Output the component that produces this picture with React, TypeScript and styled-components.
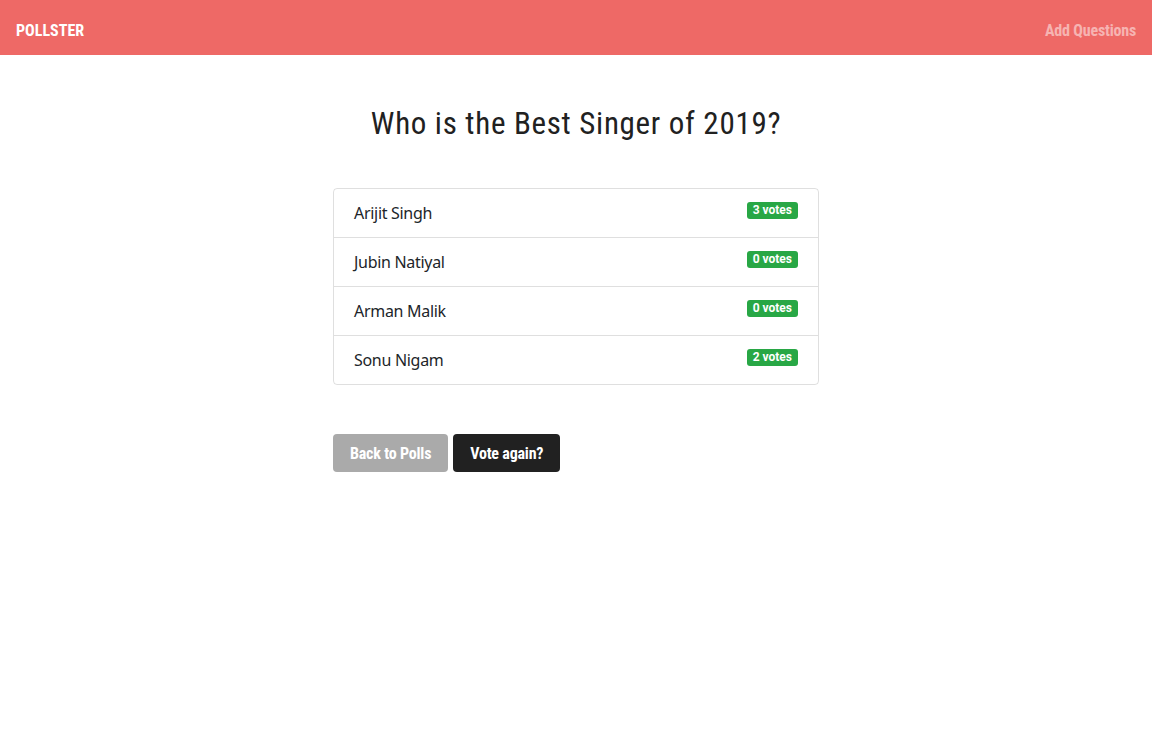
import React from "react";
import styled, { createGlobalStyle } from "styled-components";

const Global = createGlobalStyle`
  html, body { margin: 0; padding: 0; background: #fff; }
  body { font-family: "Noto Sans", "Open Sans", sans-serif; color: #212529; }
  * { box-sizing: border-box; }
`;

const cond = `"Roboto Condensed", "Open Sans", sans-serif`;

const Navbar = styled.nav`
  height: 55px;
  background: #ee6966;
  display: flex;
  align-items: center;
  justify-content: space-between;
  padding: 6px 16px 0;
`;

const Brand = styled.a`
  font-family: ${cond};
  font-weight: 700;
  font-size: 16px;
  color: #fff;
`;

const NavLink = styled.a`
  font-family: ${cond};
  font-weight: 700;
  font-size: 16px;
  color: rgba(255, 255, 255, 0.5);
  letter-spacing: -0.2px;
`;

const Main = styled.main`
  width: 486px;
  margin: 0 auto;
  display: flex;
  flex-direction: column;
`;

const Title = styled.h1`
  font-family: ${cond};
  font-weight: 400;
  font-size: 31px;
  letter-spacing: 0.7px;
  white-space: nowrap;
  text-align: center;
  margin: 50px 0 46px;
  color: #212121;
  line-height: 1.2;
`;

const List = styled.ul`
  list-style: none;
  margin: 0;
  padding: 0;
  border: 1px solid rgba(0, 0, 0, 0.125);
  border-radius: 4px;
`;

const Item = styled.li`
  height: 48px;
  display: flex;
  justify-content: space-between;
  align-items: center;
  padding: 0 20px;
  font-size: 16px;
  letter-spacing: -0.3px;
  color: #212529;
  & + & {
    border-top: 1px solid rgba(0, 0, 0, 0.125);
    height: 49px;
  }
`;

const Badge = styled.span`
  background: #28a745;
  color: #fff;
  font-family: Roboto, "Noto Sans", sans-serif;
  font-weight: 700;
  font-size: 12px;
  letter-spacing: 0;
  line-height: 17px;
  height: 17px;
  padding: 0 6px;
  border-radius: 3px;
  align-self: flex-start;
  margin-top: 13px;
`;

const Actions = styled.div`
  display: flex;
  gap: 5px;
  margin-top: 49px;
`;

const Button = styled.button<{ $dark?: boolean }>`
  height: 38px;
  border: none;
  border-radius: 4px;
  padding: 0 17px;
  font-family: ${cond};
  font-weight: 700;
  font-size: 16px;
  letter-spacing: -0.2px;
  color: #fff;
  background: ${(p) => (p.$dark ? "#212121" : "#aaaaaa")};
  cursor: pointer;
`;

const options = [
  { name: "Arijit Singh", votes: 3 },
  { name: "Jubin Natiyal", votes: 0 },
  { name: "Arman Malik", votes: 0 },
  { name: "Sonu Nigam", votes: 2 },
];

export default function App() {
  return (
    <>
      <Global />
      <Navbar>
        <Brand>POLLSTER</Brand>
        <NavLink>Add Questions</NavLink>
      </Navbar>
      <Main>
        <Title>Who is the Best Singer of 2019?</Title>
        <List>
          {options.map((o) => (
            <Item key={o.name}>
              <span>{o.name}</span>
              <Badge>{o.votes} votes</Badge>
            </Item>
          ))}
        </List>
        <Actions>
          <Button>Back to Polls</Button>
          <Button $dark>Vote again?</Button>
        </Actions>
      </Main>
    </>
  );
}
